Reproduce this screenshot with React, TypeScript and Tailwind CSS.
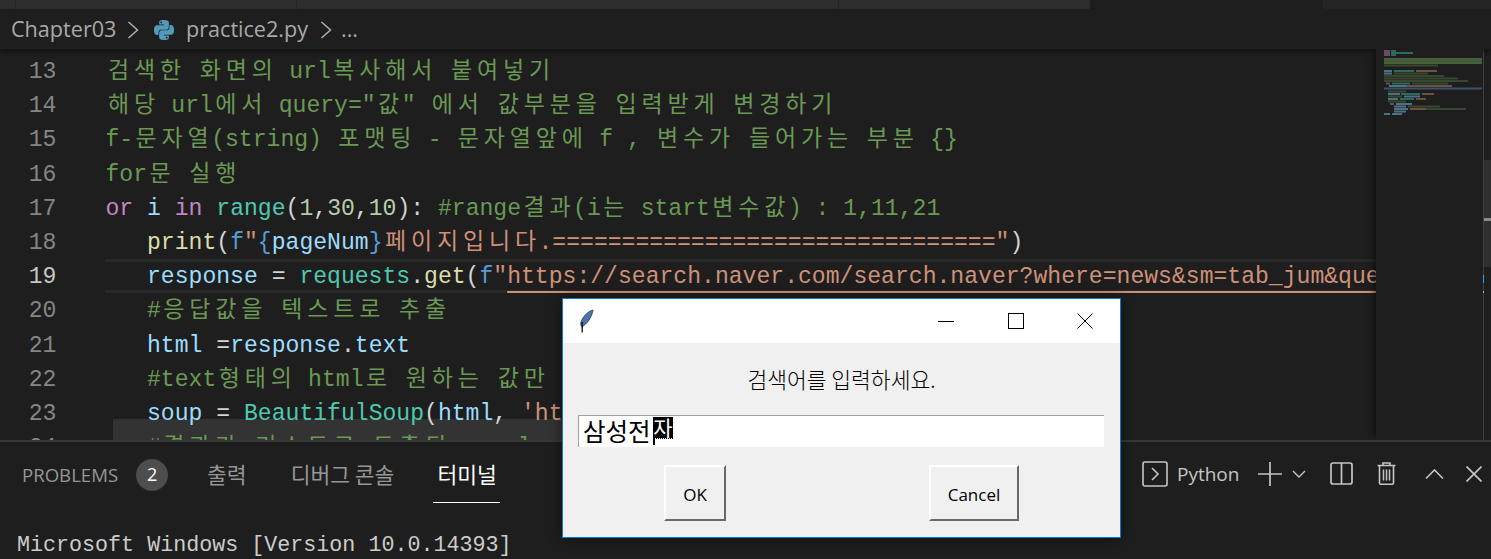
import { SiPython } from 'react-icons/si';

type Tok = [string, string];

const C = 'text-[#6a9955]';
const K = 'text-[#c586c0]';
const V = 'text-[#9cdcfe]';
const F = 'text-[#dcdcaa]';
const T = 'text-[#4ec9b0]';
const S = 'text-[#ce9178]';
const N = 'text-[#b5cea8]';
const B = 'text-[#569cd6]';
const P = 'text-[#d4d4d4]';

const lines: { n: number; toks: Tok[]; active?: boolean }[] = [
  { n: 13, toks: [['#검색한 화면의 url복사해서 붙여넣기', C]] },
  { n: 14, toks: [['#해당 url에서 query="값" 에서 값부분을 입력받게 변경하기', C]] },
  { n: 15, toks: [['#f-문자열(string) 포맷팅 - 문자열앞에 f , 변수가 들어가는 부분 {}', C]] },
  { n: 16, toks: [['#for문 실행', C]] },
  {
    n: 17,
    toks: [
      ['for', K], [' ', P], ['i', V], [' ', P], ['in', K], [' ', P], ['range', T], ['(', P],
      ['1', N], [',', P], ['30', N], [',', P], ['10', N], ['): ', P],
      ['#range결과(i는 start변수값) : 1,11,21', C],
    ],
  },
  {
    n: 18,
    toks: [
      ['    ', P], ['print', F], ['(', P], ['f', B], ['"', S], ['{', B], ['pageNum', V], ['}', B],
      ['페이지입니다.================================', S], ['"', S], [')', P],
    ],
  },
  {
    n: 19,
    active: true,
    toks: [
      ['    ', P], ['response', V], [' = ', P], ['requests', T], ['.', P], ['get', F], ['(', P], ['f', B], ['"', S],
      ['https://search.naver.com/search.naver?where=news&sm=tab_jum&query=', 'link'],
    ],
  },
  { n: 20, toks: [['    ', P], ['#응답값을 텍스트로 추출', C]] },
  { n: 21, toks: [['    ', P], ['html', V], [' =', P], ['response', V], ['.', P], ['text', V]] },
  { n: 22, toks: [['    ', P], ['#text형태의 html로 원하는 값만 추출', C]] },
  {
    n: 23,
    toks: [
      ['    ', P], ['soup', V], [' = ', P], ['BeautifulSoup', T], ['(', P], ['html', V], [', ', P],
      ["'html.parser'", S], [')', P],
    ],
  },
  { n: 24, toks: [['    ', P], ['#결과가 리스트로 도출된 - select(', C]] },
];

// hangul is double width in the editor font, so every syllable gets a fixed box
const Wide = ({ text }: { text: string }) => (
  <>
    {text.split(/([\uac00-\ud7a3])/).map((part, i) =>
      /[\uac00-\ud7a3]/.test(part) ? (
        <span key={i} className="inline-block w-[26px] text-center text-[23px] font-normal">
          {part}
        </span>
      ) : (
        <span key={i}>{part}</span>
      ),
    )}
  </>
);

const CodeLine = ({ n, toks, active }: { n: number; toks: Tok[]; active?: boolean }) => (
  <div className="flex h-[34.2px] shrink-0 leading-[37px]">
    <div className={`w-[105px] shrink-0 pr-[48.6px] text-right ${active ? 'text-[#c6c6c6]' : 'text-[#858585]'}`}>{n}</div>
    <div className={`min-w-0 flex-1 overflow-x-clip overflow-y-visible ${active ? 'border-y-[3px] border-[#282828] leading-[31px]' : ''}`}>
      <div className="relative z-10 -ml-[13.4px] whitespace-pre">
        {toks.map(([text, cls], i) =>
          cls === 'link' ? (
            <span key={i} className="text-[#ce9178] underline decoration-[#ce9178] decoration-2 underline-offset-[8px]">
              {text}
            </span>
          ) : (
            <span key={i} className={cls}>
              <Wide text={text} />
            </span>
          ),
        )}
      </div>
    </div>
  </div>
);

const miniRows: [number, number, number, string][] = [
  [0, 8, 14, '#6a4a68'], [2, 8, 14, '#6a4a68'], [4, 8, 14, '#6a4a68'],
  [0, 15, 20, '#2a6a5c'], [2, 15, 37, '#2a6a5c'], [4, 15, 20, '#2a6a5c'],
  [8, 8, 106, '#48603a'], [10, 8, 106, '#42583a'], [12, 8, 106, '#48603a'], [14.5, 8, 62, '#36482e'],
  [20, 8, 16, '#4f7186'], [20, 18, 38, '#2a6a5c'], [20, 40, 61, '#6d5044'],
  [22.5, 8, 16, '#4f7186'], [22.5, 18, 52, '#36482e'],
  [25, 8, 68, '#36482e'], [27.5, 8, 82, '#36482e'], [30, 8, 92, '#36482e'],
  [32.5, 10, 14, '#6a4a68'], [32.5, 16, 34, '#2a6a5c'], [32.5, 36, 72, '#36482e'],
  [35, 13, 30, '#4f7186'], [35, 30, 76, '#6d5044'],
  [37.5, 8, 106, '#3a526c'],
  [40.5, 12, 30, '#36482e'],
  [43, 12, 24, '#4f7186'], [43, 25, 44, '#2a6a5c'], [43, 46, 58, '#6d5044'],
  [45.5, 12, 26, '#36482e'], [45.5, 28, 44, '#4f7186'],
  [48, 12, 22, '#4f7186'], [48, 24, 38, '#2a6a5c'], [48, 40, 50, '#6d5044'],
  [50.5, 12, 30, '#36482e'],
  [53, 14, 18, '#6a4a68'], [53, 20, 36, '#4f7186'],
  [55.5, 18, 30, '#4f7186'], [55.5, 32, 64, '#36482e'],
  [58, 18, 32, '#4f7186'], [58, 34, 50, '#6d5044'], [58, 50, 90, '#36482e'],
  [60.5, 18, 30, '#4f7186'],
  [63, 8, 14, '#4f7186'], [63, 16, 26, '#4f7186'],
];

const Minimap = () => (
  <div className="relative z-20 w-[107px] shrink-0 bg-[#1e1e1e] pt-[1px] shadow-[-6px_0_6px_-4px_rgba(0,0,0,0.55)]">
    <svg width="107" height="80" viewBox="0 0 107 80">
      {miniRows.map(([y, a, b, fill], i) => (
        <rect key={i} x={a} y={y} width={b - a} height="2" fill={fill} />
      ))}
    </svg>
  </div>
);

const Feather = () => (
  <svg width="15" height="24" viewBox="0 0 15 24">
    <path d="M14 1C9.5 2 4 7 2 13c-.6 2-.2 3.6.8 4.6C8 15.5 13 8 14 1z" fill="#4a74b0" stroke="#3a4150" strokeWidth="0.9" />
    <path d="M3 18.5l.9-2.5" stroke="#666" strokeWidth="1.6" />
    <path d="M3.2 23.5V13" stroke="#0d0d0d" strokeWidth="1.3" />
  </svg>
);

const WinButton = ({ children }: { children: React.ReactNode }) => (
  <div className="flex h-[44px] w-[69.5px] items-center justify-center">{children}</div>
);

const Dialog = () => (
  <div className="absolute left-[562px] top-[298px] z-30 flex h-[240px] w-[559px] flex-col border border-[#0a7bd0] bg-[#f0f0f0] font-['Noto_Sans_CJK_KR','Open_Sans',sans-serif] shadow-[0_0_14px_rgba(0,0,0,0.45)]">
    <div className="flex h-[44px] items-center bg-white pl-[16px]">
      <Feather />
      <div className="ml-auto flex">
        <WinButton>
          <svg width="16" height="16" viewBox="0 0 16 16"><path d="M0 8.5h16" stroke="#000" /></svg>
        </WinButton>
        <WinButton>
          <svg width="16" height="16" viewBox="0 0 16 16"><rect x="0.5" y="0.5" width="15" height="15" fill="none" stroke="#000" /></svg>
        </WinButton>
        <WinButton>
          <svg width="16" height="16" viewBox="0 0 16 16"><path d="M0.5 0.5l15 15M15.5 0.5l-15 15" stroke="#000" /></svg>
        </WinButton>
      </div>
    </div>
    <div className="mt-[21px] text-center text-[21.5px] font-light leading-[30px] text-black">검색어를 입력하세요.</div>
    <div className="ml-[15px] mr-[16px] mt-[21px] flex h-[32px] items-start border-l border-t border-[#a0a0a0] bg-white pl-[4px]">
      <span className="w-[70px] text-[24.5px] leading-[29px] text-black">삼성전</span>
      <span className="relative mt-[1px] inline-block h-[21px] w-[20px] overflow-visible bg-black text-center text-[21px] leading-[21px] text-white">
        자
        <span className="absolute -bottom-px left-0 w-full border-b border-dotted border-black" />
        <span className="absolute -bottom-[7px] left-0 h-[7px] w-[2px] bg-black" />
      </span>
    </div>
    <div className="ml-[101px] mt-[18px] flex gap-[203px] font-['Open_Sans',sans-serif] text-[17px] text-black">
      <div className="flex h-[56px] w-[62px] items-center justify-center border-2 border-b-[#696969] border-l-white border-r-[#696969] border-t-white pt-[3px]">OK</div>
      <div className="flex h-[56px] w-[90px] items-center justify-center border-2 border-b-[#696969] border-l-white border-r-[#696969] border-t-white pt-[3px]">Cancel</div>
    </div>
  </div>
);

const Chevron = () => (
  <svg width="12" height="18" viewBox="0 0 12 18" className="shrink-0">
    <path d="M1.5 1l9 8-9 8" fill="none" stroke="#b0b0b0" strokeWidth="1.5" />
  </svg>
);

const PanelIcons = () => (
  <div className="ml-auto flex items-center text-[#c5c5c5]">
    <svg width="26" height="26" viewBox="0 0 26 26">
      <rect x="1" y="1" width="24" height="24" rx="2" fill="none" stroke="#c5c5c5" strokeWidth="1.6" />
      <path d="M10 7l6 6-6 6" fill="none" stroke="#c5c5c5" strokeWidth="1.6" />
    </svg>
    <span className="ml-[9px] w-[61px] font-['Open_Sans',sans-serif] text-[19px] leading-[26px] text-[#c5c5c5]">Python</span>
    <svg className="ml-[20px]" width="24" height="24" viewBox="0 0 24 24">
      <path d="M12 0v24M0 12h24" stroke="#c5c5c5" strokeWidth="1.7" />
    </svg>
    <svg className="ml-[10px]" width="14" height="8" viewBox="0 0 14 8">
      <path d="M1 1l6 6 6-6" fill="none" stroke="#c5c5c5" strokeWidth="1.4" />
    </svg>
    <svg className="ml-[24px]" width="23" height="23" viewBox="0 0 23 23">
      <rect x="1" y="1" width="21" height="21" rx="2" fill="none" stroke="#c5c5c5" strokeWidth="1.7" />
      <path d="M11.5 1v21" stroke="#c5c5c5" strokeWidth="1.7" />
    </svg>
    <svg className="ml-[24px]" width="19" height="23" viewBox="0 0 19 23">
      <path d="M6 3V1h7v2M0.5 3.5h18M2.5 4v17a1.2 1.2 0 0 0 1.2 1.2h11.6a1.2 1.2 0 0 0 1.2-1.2V4" fill="none" stroke="#c5c5c5" strokeWidth="1.6" />
      <path d="M6.5 7.5v11M9.5 7.5v11M12.5 7.5v11" stroke="#c5c5c5" strokeWidth="1.5" />
    </svg>
    <svg className="ml-[29px]" width="19" height="10" viewBox="0 0 19 10">
      <path d="M1 9.5l8.5-8.5 8.5 8.5" fill="none" stroke="#c5c5c5" strokeWidth="1.6" />
    </svg>
    <svg className="ml-[22px]" width="16" height="16" viewBox="0 0 16 16">
      <path d="M0.5 0.5l15 15M15.5 0.5l-15 15" stroke="#c5c5c5" strokeWidth="1.7" />
    </svg>
  </div>
);

export default function App() {
  return (
    <div className="relative flex h-[559px] w-[1491px] flex-col overflow-hidden bg-[#1e1e1e]">
      <div className="flex h-[9px] shrink-0 bg-[#252526]">
        <div className="w-[16px] border-r border-[#252526] bg-[#2d2d2d]" />
        <div className="w-[281px] border-r border-[#252526] bg-[#2d2d2d]" />
        <div className="w-[542px] border-r border-[#252526] bg-[#2d2d2d]" />
        <div className="w-[251px] bg-[#2d2d2d]" />
        <div className="w-[233px] bg-[#1e1e1e]" />
      </div>

      <div className="relative z-20 flex h-[40px] shrink-0 items-center bg-[#1e1e1e] pl-[11px] pt-[1px] font-['Open_Sans',sans-serif] text-[21.6px] text-[#a9a9a9] shadow-[0_3px_5px_rgba(0,0,0,0.4)]">
        <span className="w-[105px]">Chapter03</span>
        <span className="ml-[11px]"><Chevron /></span>
        <SiPython className="ml-[15px] shrink-0 text-[#519aba]" size={20} />
        <span className="ml-[12px] w-[124px]">practice2.py</span>
        <span className="ml-[10px]"><Chevron /></span>
        <span className="ml-[9px]">...</span>
      </div>

      <div className="relative flex h-[391px] shrink-0 overflow-hidden">
        <div className="absolute left-[113px] top-[370px] h-[21px] w-[460px] bg-[#333333]" />
        <div className="flex min-w-0 flex-1 flex-col pt-[5px] font-['Liberation_Mono','Noto_Sans_CJK_KR',monospace] text-[23.08px]">
          {lines.map((l) => (
            <CodeLine key={l.n} n={l.n} toks={l.toks} active={l.active} />
          ))}
        </div>
        <Minimap />
        <div className="relative w-[8px] shrink-0 border-l border-[#404040]">
          <div className="mt-[111px] h-[107px] bg-[#2f2f2f]" />
          <div className="absolute left-0 top-[169px] h-[3px] w-full bg-[#8a8a8a]" />
          <div className="absolute -left-[2px] top-[226px] h-[8px] w-[2px] bg-[#3794ff]" />
          <div className="absolute -left-[2px] top-[242px] h-[2px] w-[2px] bg-[#75beff]" />
        </div>
      </div>

      <div className="flex min-h-0 flex-1 flex-col border-t-2 border-[#383838] font-['Noto_Sans_CJK_KR','Open_Sans',sans-serif]">
        <div className="flex h-[63px] shrink-0 items-center pl-[22px] pr-[9px] text-[21.5px] text-[#969696]">
          <span className="mt-[3px] font-['Open_Sans',sans-serif] text-[18.6px]">PROBLEMS</span>
          <span className="ml-[18px] mt-[2px] flex h-[32px] w-[32px] items-center justify-center rounded-full bg-[#4d4d4d] font-['Open_Sans',sans-serif] text-[18px] text-white">2</span>
          <span className="ml-[39px] mt-[1px]">출력</span>
          <span className="ml-[44px] mt-[1px]">디버그 콘솔</span>
          <span className="relative ml-[43px] mt-[1px] text-white">
            터미널
            <span className="absolute -bottom-[13px] -left-[4px] -right-[3px] h-px bg-white" />
          </span>
          <PanelIcons />
        </div>
        <div className="pl-[17px] pt-[28px] font-['Liberation_Mono',monospace] text-[21.7px] leading-[26px] text-[#cccccc]">
          Microsoft Windows [Version 10.0.14393]
        </div>
      </div>

      <Dialog />
    </div>
  );
}
